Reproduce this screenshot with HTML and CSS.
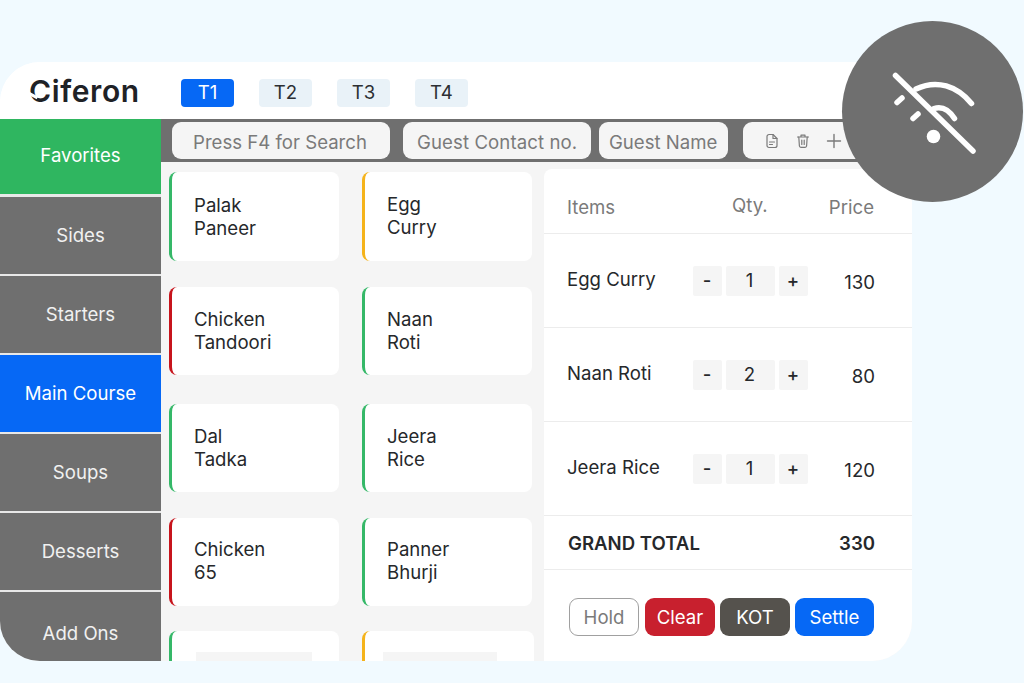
FILE: index.html
```html
<!DOCTYPE html>
<html lang="en">
<head>
<meta charset="utf-8">
<title>Ciferon POS</title>
<link rel="stylesheet" href="styles.css">
</head>
<body>
<div class="app">
  <header class="topbar">
    <div class="logo">Ciferon</div>
    <nav class="tabs">
      <span class="tab tab-active">T1</span>
      <span class="tab">T2</span>
      <span class="tab">T3</span>
      <span class="tab">T4</span>
    </nav>
  </header>
  <div class="body">
    <aside class="sidebar">
      <div class="cat cat-green">Favorites</div>
      <div class="cat">Sides</div>
      <div class="cat">Starters</div>
      <div class="cat cat-blue">Main Course</div>
      <div class="cat">Soups</div>
      <div class="cat">Desserts</div>
      <div class="cat cat-last">Add Ons</div>
    </aside>
    <main class="main">
      <div class="toolbar">
        <div class="field field-search">Press F4 for Search</div>
        <div class="field field-contact">Guest Contact no.</div>
        <div class="field field-name">Guest Name</div>
        <div class="field field-icons">
          <svg width="16" height="16" viewBox="0 0 16 16" fill="none" stroke="#7a7a7a" stroke-width="1.2" stroke-linejoin="round" stroke-linecap="round"><path d="M3 3.5a2 2 0 0 1 2-2h4l4 4v7a2 2 0 0 1-2 2H5a2 2 0 0 1-2-2z"/><path d="M9 1.5v4h4"/><path d="M5.5 9h5M5.5 11.5h3"/></svg>
          <svg width="16" height="16" viewBox="0 0 16 16" fill="none" stroke="#7a7a7a" stroke-width="1.2" stroke-linejoin="round" stroke-linecap="round"><path d="M2.5 4h11M6 4V2.2h4V4"/><path d="M3.8 4l.6 9a1.5 1.5 0 0 0 1.5 1.3h4.2a1.5 1.5 0 0 0 1.5-1.3l.6-9"/><path d="M6.8 7v4.5M9.2 7v4.5"/></svg>
          <svg width="16" height="16" viewBox="0 0 16 16" fill="none" stroke="#7a7a7a" stroke-width="1.4" stroke-linecap="round"><path d="M8 1.5v13M1.5 8h13"/></svg>
        </div>
      </div>
      <div class="content">
        <section class="menu">
          <div class="dish dish-green dish-first">Palak<br>Paneer</div>
          <div class="dish dish-yellow">Egg<br>Curry</div>
          <div class="dish dish-red">Chicken<br>Tandoori</div>
          <div class="dish dish-green">Naan<br>Roti</div>
          <div class="dish dish-green dish-low">Dal<br>Tadka</div>
          <div class="dish dish-green dish-low">Jeera<br>Rice</div>
          <div class="dish dish-red dish-tight">Chicken<br>65</div>
          <div class="dish dish-green dish-tight">Panner<br>Bhurji</div>
          <div class="dish dish-green dish-blank"><span class="placeholder"></span></div>
          <div class="dish dish-yellow dish-blank dish-blank-right"><span class="placeholder"></span></div>
        </section>
        <section class="order">
          <div class="order-head">
            <span class="col-item">Items</span>
            <span class="col-qty">Qty.</span>
            <span class="col-price">Price</span>
          </div>
          <div class="order-row">
            <span class="col-item">Egg Curry</span>
            <div class="stepper"><span class="step">-</span><span class="count">1</span><span class="step">+</span></div>
            <span class="col-price">130</span>
          </div>
          <div class="order-row">
            <span class="col-item">Naan Roti</span>
            <div class="stepper"><span class="step">-</span><span class="count">2</span><span class="step">+</span></div>
            <span class="col-price">80</span>
          </div>
          <div class="order-row">
            <span class="col-item">Jeera Rice</span>
            <div class="stepper"><span class="step">-</span><span class="count">1</span><span class="step">+</span></div>
            <span class="col-price">120</span>
          </div>
          <div class="order-total">
            <span>GRAND TOTAL</span>
            <span>330</span>
          </div>
          <div class="actions">
            <span class="btn btn-hold">Hold</span>
            <span class="btn btn-clear">Clear</span>
            <span class="btn btn-kot">KOT</span>
            <span class="btn btn-settle">Settle</span>
          </div>
        </section>
      </div>
    </main>
  </div>
</div>
<div class="offline">
  <svg width="100" height="100" viewBox="0 0 100 100" fill="none" stroke="#fff" stroke-width="5.5" stroke-linecap="round">
    <path d="M12.5 13.5L90 89"/>
    <path d="M33 27C54 17 74 24 88.5 41.5"/>
    <path d="M14 40.5L19 36"/>
    <path d="M30 56.5L35 52"/>
    <path d="M51 46.5C59 44 66 48 71.5 56.5"/>
    <circle cx="50.5" cy="74.5" r="6.8" fill="#fff" stroke="none"/>
  </svg>
</div>
</body>
</html>
```

FILE: styles.css
```css
* { box-sizing: border-box; }
html, body { margin: 0; height: 100%; }
body {
  width: 1024px;
  height: 683px;
  overflow: hidden;
  position: relative;
  background: #f1faff;
  font-family: Inter, "Liberation Sans", sans-serif;
  color: #26282b;
  padding-top: 62px;
}
.app {
  width: 912px;
  height: 599px;
  background: #fff;
  border-radius: 40px 0 40px 40px;
  overflow: hidden;
  display: flex;
  flex-direction: column;
}
.topbar {
  height: 57px;
  flex: none;
  display: flex;
  align-items: center;
  padding-left: 29px;
  background: #fff;
}
.logo {
  width: 152px;
  font-size: 30px;
  font-weight: 600;
  letter-spacing: 0.6px;
  color: #1f2226;
  position: relative;
}
.logo::before {
  content: "";
  position: absolute;
  left: -1px;
  top: 21px;
  width: 10px;
  height: 3px;
  background: #fff;
  transform: rotate(28deg);
}
.tabs { display: flex; gap: 25px; margin-top: 4px; }
.tab {
  width: 53px;
  height: 28px;
  border-radius: 4px;
  background: #e9f2f8;
  font-size: 18.6px;
  display: flex;
  align-items: center;
  justify-content: center;
  color: #2c2f33;
  padding-bottom: 1px;
}
.tab-active { background: #0668f5; color: #fff; }
.body { flex: 1; display: flex; min-height: 0; }
.sidebar {
  width: 161px;
  flex: none;
  display: flex;
  flex-direction: column;
  background: #e8e8e8;
}
.cat {
  height: 77px;
  margin-bottom: 2px;
  background: #6f6f6f;
  color: #f1f1f1;
  font-size: 18.6px;
  display: flex;
  align-items: center;
  justify-content: center;
  flex: none;
  padding-bottom: 1px;
}
.cat-green { height: 75px; margin-bottom: 3px; background: #2fb660; color: #fff; padding-bottom: 3px; }
.cat-blue { background: #0668f5; color: #fff; }
.cat-last { height: 69px; margin-bottom: 0; padding: 12px 0 0; }
.main { flex: 1; display: flex; flex-direction: column; min-width: 0; }
.toolbar {
  height: 43px;
  flex: none;
  background: #6f6f6f;
  display: flex;
  align-items: center;
  padding-left: 11px;
  gap: 13px;
}
.field {
  height: 37px;
  border-radius: 9px;
  background: #f5f5f5;
  color: #7a7a7a;
  font-size: 18.6px;
  display: flex;
  align-items: center;
  flex: none;
  padding-top: 3px;
}
.field-search { width: 218px; padding-left: 21px; }
.field-contact { width: 188px; padding-left: 14px; letter-spacing: 0.1px; }
.field-name { width: 129px; padding-left: 10px; margin-left: -5px; }
.field-icons { width: 140px; padding: 0 0 0 21px; gap: 15px; margin-left: 2px; }
.content { flex: 1; display: flex; min-height: 0; background: #f5f5f5; }
.menu {
  width: 383px;
  flex: none;
  display: grid;
  grid-template-columns: 170px 170px;
  grid-template-rows: 89px 88px 91px 88px 40px;
  column-gap: 23px;
  row-gap: 26px;
  padding: 10px 0 0 8px;
  align-content: start;
  overflow: hidden;
}
.dish {
  background: #fff;
  border-radius: 8px;
  border-left: 3px solid #2fb660;
  padding: 21px 0 0 22px;
  font-size: 18.6px;
  line-height: 23px;
  color: #26282b;
}
.dish-first { padding-top: 22px; }
.dish-low { margin-top: 3px; }
.dish-tight { padding-top: 20px; line-height: 22.5px; }
.dish-green { border-left-color: #35b868; }
.dish-yellow { border-left-color: #f5b31a; }
.dish-red { border-left-color: #c7141c; }
.dish-blank { padding-left: 24px; margin-top: -1px; }
.dish-blank-right { padding-left: 18px; margin-right: -2px; }
.placeholder {
  display: block;
  width: 116px;
  height: 9px;
  background: #f5f5f5;
}
.dish-blank-right .placeholder { width: 114px; }
.order {
  flex: 1;
  margin-top: 7px;
  background: #fff;
  display: flex;
  flex-direction: column;
  border-radius: 8px 0 0 0;
}
.order-head, .order-row, .order-total {
  display: flex;
  align-items: center;
  border-bottom: 1px solid #ececec;
  padding: 0 37px 0 23px;
  flex: none;
}
.order-head { height: 65px; color: #7a7a7a; font-size: 18.6px; padding-top: 12px; }
.order-row { height: 94px; font-size: 18.6px; }
.col-item { width: 150px; position: relative; top: -2px; }
.order-head .col-item { top: 0; }
.col-qty { width: 101px; padding-left: 15px; position: relative; top: -2px; }
.col-price { margin-left: auto; text-align: right; }
.order-head .col-price { position: relative; left: -1px; }
.order-row .col-price { position: relative; top: 1px; }
.stepper { display: flex; gap: 4px; margin-left: -24px; }
.step, .count {
  height: 30px;
  background: #f5f5f5;
  border-radius: 2px;
  display: flex;
  align-items: center;
  justify-content: center;
  font-size: 18.6px;
  font-weight: 500;
  padding-bottom: 1px;
}
.step { width: 29px; padding-right: 1px; }
.count { width: 49px; font-weight: 400; padding-right: 2px; }
.order-total {
  height: 54px;
  justify-content: space-between;
  font-size: 18.6px;
  font-weight: 600;
  padding-left: 24px;
  padding-top: 1px;
}
.actions {
  display: flex;
  gap: 5px;
  padding: 28px 0 0 25px;
}
.btn {
  height: 38px;
  width: 70px;
  border-radius: 9px;
  font-size: 18.6px;
  display: flex;
  align-items: center;
  justify-content: center;
  color: #fff;
}
.btn-hold { background: #fff; border: 1px solid #a0a0a0; color: #7a7a7a; margin-right: 1px; }
.btn-clear { background: #c8202e; }
.btn-kot { background: #55524d; }
.btn-settle { background: #0668f5; width: 79px; }
.offline {
  position: absolute;
  left: 842px;
  top: 21px;
  width: 181px;
  height: 181px;
  border-radius: 50%;
  background: #6f6f6f;
  display: flex;
  align-items: center;
  justify-content: center;
}
```
